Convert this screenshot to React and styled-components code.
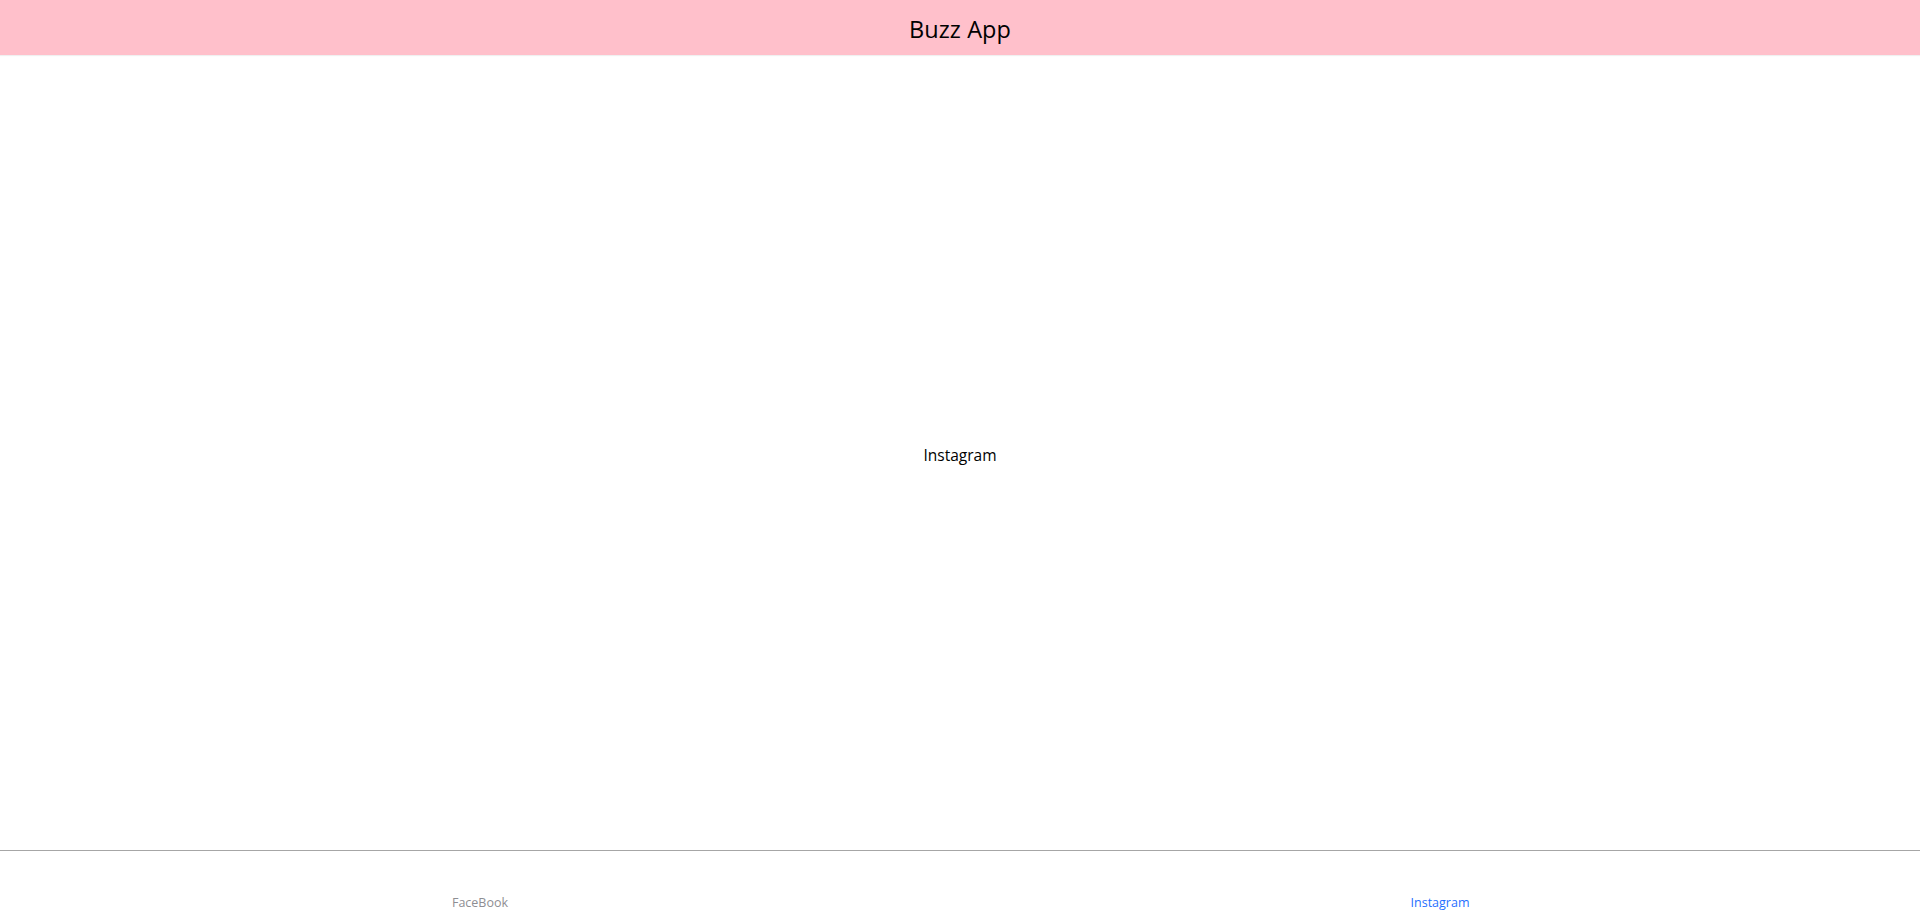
import React, { useState } from 'react';
import styled, { createGlobalStyle } from 'styled-components';

const GlobalStyle = createGlobalStyle`
    html, body {
        margin: 0;
        padding: 0;
        height: 100%;
        overflow: hidden;
        background: #fff;
    }
    body {
        font-family: "Open Sans", "Noto Sans", "Liberation Sans", sans-serif;
        color: #000;
    }
`;

const Screen = styled.div`
    display: flex;
    flex-direction: column;
    height: 100vh;
`;

const Header = styled.header`
    flex: 0 0 55px;
    background: #ffc0cb;
    display: flex;
    align-items: center;
    justify-content: center;
    box-shadow: 0 1px 1px rgba(0, 0, 0, 0.06);
    position: relative;
    z-index: 1;
`;

const Title = styled.h1`
    margin: 0;
    font-size: 23.5px;
    font-weight: 400;
    letter-spacing: 0.1px;
    padding-top: 2px;
`;

const Content = styled.main`
    flex: 1;
    display: flex;
    align-items: center;
    justify-content: center;
    font-size: 15.5px;
    padding-top: 5px;
`;

const TabBar = styled.nav`
    flex: 0 0 60px;
    display: flex;
    border-top: 1px solid #a6a6a6;
    background: #fff;
`;

const Tab = styled.button`
    flex: 1;
    display: flex;
    flex-direction: column;
    align-items: center;
    border: 0;
    background: transparent;
    padding: 0;
    cursor: pointer;
    font-family: inherit;
`;

const IconSlot = styled.span`
    height: 43px;
`;

const TabLabel = styled.span`
    font-size: 12.5px;
    color: ${({ $active }) => ($active ? '#1f6fff' : '#8e8e93')};
`;

const tabs = ['FaceBook', 'Instagram'];

const App = () => {
    const [active, setActive] = useState('Instagram');

    return (
        <>
            <GlobalStyle />
            <Screen>
                <Header>
                    <Title>Buzz App</Title>
                </Header>
                <Content>{active}</Content>
                <TabBar>
                    {tabs.map((name) => (
                        <Tab key={name} onClick={() => setActive(name)}>
                            <IconSlot />
                            <TabLabel $active={active === name}>{name}</TabLabel>
                        </Tab>
                    ))}
                </TabBar>
            </Screen>
        </>
    );
};

export default App;
